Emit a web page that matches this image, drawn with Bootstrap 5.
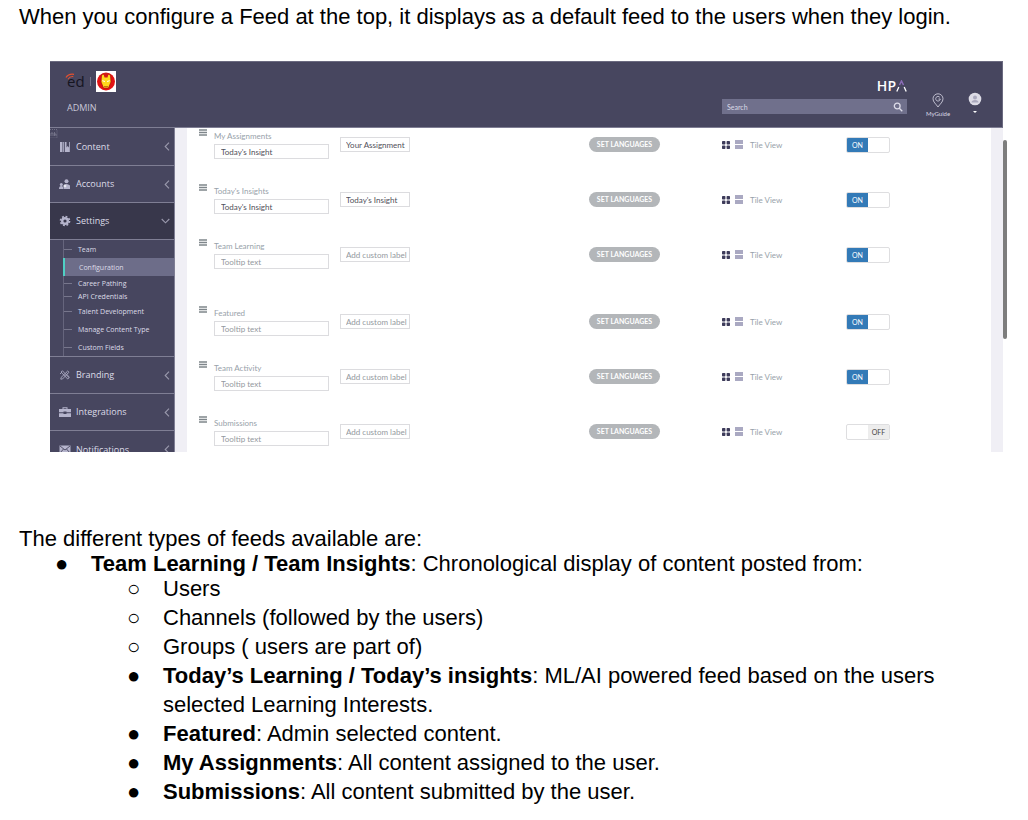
<!DOCTYPE html>
<html lang="en">
<head>
<meta charset="utf-8">
<meta name="viewport" content="width=device-width, initial-scale=1">
<title>Configuring feeds</title>
<link href="https://cdn.jsdelivr.net/npm/bootstrap@5.3.0/dist/css/bootstrap.min.css" rel="stylesheet">
<style>
  :root { --ink: #47465f; --rule: #7f7e94; --pale: #b5b4cc; }
  body { font-family: "Liberation Sans", Arial, sans-serif; font-size: 22px; line-height: 25px; color: #000; background: #fff; }
  .doc { padding: 4px 20px 0 19px; }
  .doc ul { list-style: none; }
  .doc .feeds li > div { display: grid; grid-template-columns: 36px 1fr; }
  .doc .feeds ul { line-height: 29px; margin-top: -2px; }
  .feeds > li > div { padding-left: 36px; }
  .doc .feeds > li > ul { padding-left: 108px; }

  /* Admin console */
  .console-frame { margin: 32px 1px 74px 31px; }
  .console { height: 391px; overflow: hidden; font-family: Lato, "Open Sans", sans-serif; font-size: 7px; line-height: 10px; }
  .console-scroll { width: 4px; padding-top: 79px; }
  .console-thumb { height: 199px; background: #7d7d7d; border-radius: 2px; }
  .topbar { background: var(--ink); border-top: 1px solid #6b6a80; border-bottom: 1px solid var(--rule); border-right: 1px solid #6b6a80; height: 67px; color: #fff; }
  .brand { padding: 9px 0 0 17px; }
  .ed { font-family: "Open Sans", sans-serif; font-size: 15px; line-height: 21px; color: #16151f; }
  .ed svg { position: absolute; left: -2px; top: 2px; }
  .admin { font-family: "Open Sans", sans-serif; font-size: 9px; line-height: 12px; color: #c9c8d8; margin-top: 10px; }
  .hp { font-family: "Open Sans", sans-serif; font-weight: 600; font-size: 14px; line-height: 15px; }
  .tools { padding: 0 20px 0 0; }
  .finder { width: 185px; height: 15px; background: #70708c; margin-top: 6px; }
  .finder input { font-size: 7px; line-height: 10px; padding: 0 5px; background: none; border: 0; color: #e4e4ee; min-height: 0; box-shadow: none; }
  .finder input::placeholder { color: #d9d9e6; opacity: 1; }
  .tools button, .plain { background: none; border: 0; padding: 0; color: inherit; line-height: 0; }
  .guide { width: 24px; margin: 31px 0 0 19px; }
  .guide span { font-size: 6px; line-height: 8px; color: #d9d8e4; margin-top: 2px; }
  .person { width: 14px; margin: 30px 0 0 18px; }

  .side { width: 125px; flex: none; background: var(--ink); border-right: 1px solid var(--rule); font-family: "Open Sans", sans-serif; }
  .side a { color: #dddce8; text-decoration: none; }
  .side .top-link { height: 37px; box-sizing: content-box; border-bottom: 1px solid var(--rule); font-size: 9px; line-height: 12px; padding: 0 4px 0 9px; }
  .side .half { height: 36px; }
  .side .open { background: #38374b; }
  .side .top-link svg:first-child { width: 12px; margin-right: 5px; color: var(--pale); }
  .side .top-link svg:last-child { margin-left: auto; color: #9a99ad; }
  .sub { margin-left: 13px; border-left: 1px solid #66657d; }
  .sub a { display: flex; align-items: center; height: 18px; font-size: 7px; line-height: 9px; }
  .sub a::before { content: ""; width: 8px; margin-right: 6px; border-top: 1px solid #77768c; }
  .sub .tight { height: 15px; }
  .sub .tighter { height: 11px; }
  .sub .now { background: #6d6d89; border-left: 2px solid #4fd0c4; margin-left: -1px; }
  .sub .now::before { border-color: transparent; }
  .sub-wrap { border-bottom: 1px solid var(--rule); }

  .stage { background: #f0eff5; padding: 0 12px; min-width: 0; }
  .sheet { background: #fff; }
  .feed { display: grid; grid-template-columns: 15px 126px 249fr 133fr 124fr 145fr; height: 55px; padding-left: 12px; font-size: 8px; }
  .feed.roomy { height: 67px; }
  .feed > * { margin-top: 9px; }
  .feed > .drag { margin-top: 1px; align-self: start; justify-self: start; color: #7f868b; }
  .feed > .named { margin-top: 4px; }
  .named label { display: block; color: #98a2aa; line-height: 9px; margin-bottom: 3px; }
  .feed .form-control { border: 1px solid #dcdcdf; border-radius: 0; font-size: 8px; line-height: 11px; height: 15px; min-height: 0; padding: 0 0 0 6px; color: #50505a; }
  .feed .form-control::placeholder { color: #94999e; opacity: 1; }
  .named .form-control { width: 115px; }
  .feed .custom { width: 70px; padding-left: 5px; }
  .langs { width: 71px; height: 15px; border: 0; border-radius: 8px; background: #b3b6b9; color: #fff; font-size: 7px; line-height: 9px; font-weight: 700; padding: 0; white-space: nowrap; }
  .views { height: 15px; color: #98a2aa; line-height: 8px; }
  .views button + button { margin: 0 7px 0 5px; }
  .flip { display: grid; grid-template-columns: 1fr 1fr; width: 44px; height: 16px; border: 1px solid #dedee0; border-radius: 2px; font-size: 7px; line-height: 14px; text-align: center; overflow: hidden; background: #fff; }
  .flip .on { background: #337ab7; color: #fff; }
  .flip .off { background: #ededed; color: #444; }
  .btn-check:checked + .flip .off, .btn-check:not(:checked) + .flip .on { visibility: hidden; }
</style>
</head>
<body>
<svg class="d-none" aria-hidden="true">
  <symbol id="bars" viewBox="0 0 8 7"><path d="M0 1h8M0 3.5h8M0 6h8" stroke="currentColor" stroke-width="1.4"/></symbol>
  <symbol id="tiles" viewBox="0 0 8 8"><g fill="#3d3b5a"><rect width="3.4" height="3.4" rx=".7"/><rect x="4.6" width="3.4" height="3.4" rx=".7"/><rect y="4.6" width="3.4" height="3.4" rx=".7"/><rect x="4.6" y="4.6" width="3.4" height="3.4" rx=".7"/></g></symbol>
  <symbol id="cards" viewBox="0 0 8 9"><path d="M0 0h8v4H0zM0 5h8v4H0z" fill="#aaa9c2"/></symbol>
  <symbol id="left" viewBox="0 0 6 9"><path d="M5 .7 1.200 4.500 5 8.300" fill="none" stroke="currentColor" stroke-width="1.100"/></symbol>
</svg>
<main class="doc">
  <p class="mb-0">When you configure a Feed at the top, it displays as a default feed to the users when they login.</p>

  <div class="console-frame d-flex">
    <section class="console flex-grow-1 d-flex flex-column" aria-label="Admin console">
      <header class="topbar d-flex justify-content-between flex-shrink-0">
        <div class="brand">
          <div class="d-flex align-items-center">
            <span class="ed position-relative">ed<svg width="10" height="8" viewBox="0 0 10 8" fill="none" stroke="#e2502f"><path d="M1 4.500Q3.500.500 9 1.300" stroke-width="1.300"/><path d="M3 6.200Q4.800 3.300 8.300 3.600" stroke-width="1.100"/></svg></span>
            <svg class="mx-1" width="3" height="9" aria-hidden="true"><path d="M1.500 0v9" stroke="#77768d"/></svg>
            <svg width="20" height="21" viewBox="0 0 20 21" aria-hidden="true"><path d="M0 0h20v21H0z" fill="#fff"/><circle cx="10" cy="10.500" r="9" fill="#e31313"/><path d="M5.500 4Q10 1 14.500 4L15 11l-2.500 6h-5L5 11z" fill="#ffd91c" stroke="#a60c0c" stroke-width=".7"/><path d="m7.500 3 1 3.500h3l1-3.500Q10 2 7.500 3z" fill="#d51616"/><path d="m6.300 9.700 2.700.8M13.700 9.700l-2.700.8" stroke="#fff" stroke-width="1"/><path d="M8 15.500h4" stroke="#b34b0c" stroke-width=".7"/></svg>
          </div>
          <div class="admin">ADMIN</div>
        </div>
        <div class="tools d-flex">
          <div class="d-flex flex-column align-items-end pt-3">
            <div class="hp d-flex align-items-center">HP<svg width="11" height="12" viewBox="0 0 11 12" fill="none" aria-hidden="true"><path d="M3.500 5 5.500 1l2 4" stroke="#8b6cb8" stroke-width="1.500"/><path d="M2.800 7 .8 11.500M8.200 7l2 4.500" stroke="#fff" stroke-width="1.300"/></svg></div>
            <form class="finder d-flex align-items-center pe-1">
              <input class="form-control" type="text" placeholder="Search" aria-label="Search">
              <button type="button" aria-label="Find"><svg width="10" height="10" viewBox="0 0 10 10" fill="none" stroke="#dddce9" stroke-width="1.300"><circle cx="4.200" cy="4" r="2.900"/><path d="m6.300 6.200 3 3"/></svg></button>
            </form>
          </div>
          <button type="button" class="guide d-flex flex-column align-items-center"><svg width="12" height="15" viewBox="0 0 12 15" fill="none" stroke="#c9c8d8" stroke-width=".9"><path d="M6 14C4 11 1 9 1 5.800a5 5 0 0 1 10 0C11 9 8 11 6 14z"/><path d="M7.800 4.300A2.300 2.300 0 1 0 8.300 6H6.500"/></svg><span>MyGuide</span></button>
          <button type="button" class="person d-flex flex-column align-items-center" aria-label="Account"><svg width="14" height="22" viewBox="0 0 14 22"><circle cx="7" cy="7" r="6.300" fill="#dddce6"/><circle cx="7" cy="5.500" r="2" fill="#aaa9bd"/><path d="M3.500 10.500q0-2.500 3.500-2.500t3.500 2.500z" fill="#aaa9bd"/><path d="M5 19h4l-2 2z" fill="#fff"/></svg></button>
        </div>
      </header>

      <div class="d-flex flex-grow-1">
        <nav class="side position-relative" aria-label="Admin">
          <svg class="position-absolute top-0 start-0" width="8" height="10" viewBox="0 0 8 10" fill="none" stroke="#85849a" stroke-width=".7" aria-hidden="true"><path d="M0 1.500h7V10H0" stroke-dasharray="1 1"/><path d="M1 8V5h2v3M4.500 4v4M4.500 6H6v2"/></svg>
          <a href="#" class="top-link d-flex align-items-center"><svg height="10" viewBox="0 0 12 10" fill="currentColor"><path d="M1 0h2.500v10H1zM4.200 0H5v10h-.8zM5.800 0h1.700v5.500L8.700 4 10 5.500V0h.8v10h-5z"/></svg>Content<svg width="6" height="9"><use href="#left"/></svg></a>
          <a href="#" class="top-link half d-flex align-items-center"><svg height="11" viewBox="0 0 12 11" fill="currentColor"><circle cx="7.500" cy="2.200" r="2"/><circle cx="2.300" cy="5.500" r="1.500"/><path d="M4.500 10V6.500Q7.500 3.500 11 6.500V10zM0 10q0-3 2.300-3T4 10z"/><circle cx="6" cy="7" r="1.400" fill="#e8e8f2"/></svg>Accounts<svg width="6" height="9"><use href="#left"/></svg></a>
          <a href="#" class="top-link half open d-flex align-items-center"><svg height="12" viewBox="0 0 12 12"><circle cx="6" cy="6" r="2.800" fill="none" stroke="currentColor" stroke-width="2.400"/><circle cx="6" cy="6" r="4.500" fill="none" stroke="currentColor" stroke-width="1.700" stroke-dasharray="1.800 1.734"/></svg>Settings<svg width="9" height="6" viewBox="0 0 9 6"><path d="m.7 1 3.800 3.800L8.300 1" fill="none" stroke="currentColor" stroke-width="1.100"/></svg></a>
          <div class="sub-wrap">
            <div class="sub">
              <a href="#">Team</a>
              <a href="#" class="now">Configuration</a>
              <a href="#" class="tight">Career Pathing</a>
              <a href="#" class="tighter">API Credentials</a>
              <a href="#">Talent Development</a>
              <a href="#">Manage Content Type</a>
              <a href="#">Custom Fields</a>
            </div>
          </div>
          <a href="#" class="top-link half d-flex align-items-center"><svg height="10" viewBox="0 0 12 10" fill="none" stroke="currentColor" stroke-width=".8"><path d="m2 2 1.500-1.200 6.500 7L8.700 9zM8.700 1 10 2.200 3.500 9 1.800 9.200 2 7.600zM1 4l1.500-1.500M8 4.500l2.500 3M7.500 2.500l1 1"/></svg>Branding<svg width="6" height="9"><use href="#left"/></svg></a>
          <a href="#" class="top-link half d-flex align-items-center"><svg height="10" viewBox="0 0 12 10" fill="currentColor"><path d="M3.500 2V.3h5V2H12v3.300H7.500v-.8h-3v.8H0V2zm1 0h3v-.8h-3zM0 6.200h4.500V7h3v-.8H12V10H0z"/></svg>Integrations<svg width="6" height="9"><use href="#left"/></svg></a>
          <a href="#" class="top-link d-flex align-items-center"><svg height="9" viewBox="0 0 12 9"><path d="M.5.500h11v8H.5z" fill="currentColor"/><path d="m1 1 5 4 5-4M1 8l3.500-4M11 8 7.500 4" fill="none" stroke="#47465f" stroke-width=".9"/></svg>Notifications<svg width="6" height="9"><use href="#left"/></svg></a>
        </nav>

        <div class="stage flex-grow-1 d-flex">
          <div class="sheet flex-grow-1">
            <div class="feed">
              <button type="button" class="plain drag" aria-label="Move"><svg width="8" height="7"><use href="#bars"/></svg></button>
              <div class="named"><label for="t1">My Assignments</label><input class="form-control" type="text" id="t1" value="Today's Insight" placeholder="Tooltip text"></div>
              <div><input class="form-control custom" type="text" value="Your Assignment" placeholder="Add custom label" aria-label="Custom label"></div>
              <div class="d-flex align-items-start"><button type="button" class="langs">SET LANGUAGES</button></div>
              <div class="views d-flex align-items-center"><button type="button" class="plain" aria-label="Tiles"><svg width="8" height="8"><use href="#tiles"/></svg></button><button type="button" class="plain" aria-label="Cards"><svg width="8" height="9"><use href="#cards"/></svg></button>Tile View</div>
              <div><input type="checkbox" class="btn-check" id="s1" checked><label class="flip" for="s1"><span class="on">ON</span><span class="off">OFF</span></label></div>
            </div>
            <div class="feed">
              <button type="button" class="plain drag" aria-label="Move"><svg width="8" height="7"><use href="#bars"/></svg></button>
              <div class="named"><label for="t2">Today's Insights</label><input class="form-control" type="text" id="t2" value="Today's Insight" placeholder="Tooltip text"></div>
              <div><input class="form-control custom" type="text" value="Today's Insight" placeholder="Add custom label" aria-label="Custom label"></div>
              <div class="d-flex align-items-start"><button type="button" class="langs">SET LANGUAGES</button></div>
              <div class="views d-flex align-items-center"><button type="button" class="plain" aria-label="Tiles"><svg width="8" height="8"><use href="#tiles"/></svg></button><button type="button" class="plain" aria-label="Cards"><svg width="8" height="9"><use href="#cards"/></svg></button>Tile View</div>
              <div><input type="checkbox" class="btn-check" id="s2" checked><label class="flip" for="s2"><span class="on">ON</span><span class="off">OFF</span></label></div>
            </div>
            <div class="feed roomy">
              <button type="button" class="plain drag" aria-label="Move"><svg width="8" height="7"><use href="#bars"/></svg></button>
              <div class="named"><label for="t3">Team Learning</label><input class="form-control" type="text" id="t3" placeholder="Tooltip text"></div>
              <div><input class="form-control custom" type="text" placeholder="Add custom label" aria-label="Custom label"></div>
              <div class="d-flex align-items-start"><button type="button" class="langs">SET LANGUAGES</button></div>
              <div class="views d-flex align-items-center"><button type="button" class="plain" aria-label="Tiles"><svg width="8" height="8"><use href="#tiles"/></svg></button><button type="button" class="plain" aria-label="Cards"><svg width="8" height="9"><use href="#cards"/></svg></button>Tile View</div>
              <div><input type="checkbox" class="btn-check" id="s3" checked><label class="flip" for="s3"><span class="on">ON</span><span class="off">OFF</span></label></div>
            </div>
            <div class="feed">
              <button type="button" class="plain drag" aria-label="Move"><svg width="8" height="7"><use href="#bars"/></svg></button>
              <div class="named"><label for="t4">Featured</label><input class="form-control" type="text" id="t4" placeholder="Tooltip text"></div>
              <div><input class="form-control custom" type="text" placeholder="Add custom label" aria-label="Custom label"></div>
              <div class="d-flex align-items-start"><button type="button" class="langs">SET LANGUAGES</button></div>
              <div class="views d-flex align-items-center"><button type="button" class="plain" aria-label="Tiles"><svg width="8" height="8"><use href="#tiles"/></svg></button><button type="button" class="plain" aria-label="Cards"><svg width="8" height="9"><use href="#cards"/></svg></button>Tile View</div>
              <div><input type="checkbox" class="btn-check" id="s4" checked><label class="flip" for="s4"><span class="on">ON</span><span class="off">OFF</span></label></div>
            </div>
            <div class="feed">
              <button type="button" class="plain drag" aria-label="Move"><svg width="8" height="7"><use href="#bars"/></svg></button>
              <div class="named"><label for="t5">Team Activity</label><input class="form-control" type="text" id="t5" placeholder="Tooltip text"></div>
              <div><input class="form-control custom" type="text" placeholder="Add custom label" aria-label="Custom label"></div>
              <div class="d-flex align-items-start"><button type="button" class="langs">SET LANGUAGES</button></div>
              <div class="views d-flex align-items-center"><button type="button" class="plain" aria-label="Tiles"><svg width="8" height="8"><use href="#tiles"/></svg></button><button type="button" class="plain" aria-label="Cards"><svg width="8" height="9"><use href="#cards"/></svg></button>Tile View</div>
              <div><input type="checkbox" class="btn-check" id="s5" checked><label class="flip" for="s5"><span class="on">ON</span><span class="off">OFF</span></label></div>
            </div>
            <div class="feed">
              <button type="button" class="plain drag" aria-label="Move"><svg width="8" height="7"><use href="#bars"/></svg></button>
              <div class="named"><label for="t6">Submissions</label><input class="form-control" type="text" id="t6" placeholder="Tooltip text"></div>
              <div><input class="form-control custom" type="text" placeholder="Add custom label" aria-label="Custom label"></div>
              <div class="d-flex align-items-start"><button type="button" class="langs">SET LANGUAGES</button></div>
              <div class="views d-flex align-items-center"><button type="button" class="plain" aria-label="Tiles"><svg width="8" height="8"><use href="#tiles"/></svg></button><button type="button" class="plain" aria-label="Cards"><svg width="8" height="9"><use href="#cards"/></svg></button>Tile View</div>
              <div><input type="checkbox" class="btn-check" id="s6"><label class="flip" for="s6"><span class="on">ON</span><span class="off">OFF</span></label></div>
            </div>
          </div>
        </div>
      </div>
    </section>
    <div class="console-scroll"><div class="console-thumb"></div></div>
  </div>

  <p class="mb-0">The different types of feeds available are:</p>
  <ul class="feeds p-0 m-0">
    <li><div><span>●</span><span><b>Team Learning / Team Insights</b>: Chronological display of content posted from:</span></div>
      <ul class="mb-0">
        <li><div><span>○</span><span>Users</span></div></li>
        <li><div><span>○</span><span>Channels (followed by the users)</span></div></li>
        <li><div><span>○</span><span>Groups ( users are part of)</span></div></li>
        <li><div><span>●</span><span><b>Today’s Learning / Today’s insights</b>: ML/AI powered feed based on the users selected Learning Interests.</span></div></li>
        <li><div><span>●</span><span><b>Featured</b>: Admin selected content.</span></div></li>
        <li><div><span>●</span><span><b>My Assignments</b>: All content assigned to the user.</span></div></li>
        <li><div><span>●</span><span><b>Submissions</b>: All content submitted by the user.</span></div></li>
      </ul>
    </li>
  </ul>
</main>
<script src="https://cdn.jsdelivr.net/npm/bootstrap@5.3.0/dist/js/bootstrap.bundle.min.js"></script>
</body>
</html>
